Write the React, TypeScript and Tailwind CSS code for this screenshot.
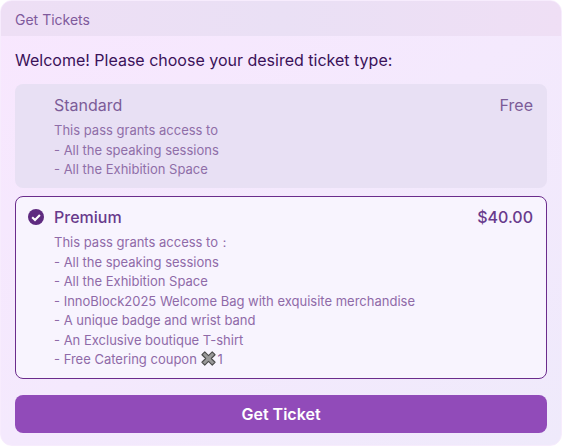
const standardLines = ['This pass grants access to', '- All the speaking sessions', '- All the Exhibition Space'];

const premiumLines = [
  'This pass grants access to：',
  '- All the speaking sessions',
  '- All the Exhibition Space',
  '- InnoBlock2025 Welcome Bag with exquisite merchandise',
  '- A unique badge and wrist band',
  '- An Exclusive boutique T-shirt',
];

const CheckIcon = () => (
  <svg width="16" height="16" viewBox="0 0 16 16" className="shrink-0">
    <circle cx="8" cy="8" r="8" fill="#5f2a80" />
    <path d="M4.2 8.3 L7 11 L11.9 5.9" fill="none" stroke="#fff" strokeWidth="2.1" />
  </svg>
);

const CrossEmoji = () => (
  <svg width="15" height="15" viewBox="0 0 16 16" className="inline-block align-[-2px] ml-[1px] mr-[1px]">
    <path
      d="M1 4 L4 1 L8 5 L12 1 L15 4 L11 8 L15 12 L12 15 L8 11 L4 15 L1 12 L5 8 Z"
      fill="#999999"
      stroke="#4d4d4d"
      strokeWidth="1.2"
      strokeLinejoin="round"
    />
  </svg>
);

const App = () => {
  return (
    <div className="w-[562px] h-[446px] overflow-hidden rounded-xl border border-[#f7ecfd] bg-gradient-to-br from-[#f8e7fe] via-[#f4e9fd] to-[#efeafb] font-['Inter',sans-serif]">
      <div className="h-[35px] flex items-center px-[14px] pt-[2px] text-sm text-[#7f5a9c] bg-gradient-to-r from-[#eedff5] via-[#eae0f5] to-[#efdff5]">
        Get Tickets
      </div>
      <div className="px-[14px] pt-[14px]">
        <p className="text-base leading-5 text-[#3a1259]">Welcome! Please choose your desired ticket type:</p>

        <div className="mt-[14px] h-[104px] rounded-lg bg-[#e8e0f4] pl-[39px] pr-[14px] pt-[9px]">
          <div className="flex justify-between text-base leading-6 text-[#7c5c98]">
            <span>Standard</span>
            <span>Free</span>
          </div>
          <div className="mt-[4px] text-[13px] leading-[19.5px] text-[#8f6ea8]">
            {standardLines.map((line) => (
              <div key={line}>{line}</div>
            ))}
          </div>
        </div>

        <div className="mt-2 h-[183px] rounded-lg border border-[#6b2c8c] bg-[#f8f4fe] pl-[38px] pr-[13px] pt-2 relative">
          <span className="absolute left-[12px] top-[12px]">
            <CheckIcon />
          </span>
          <div className="flex justify-between text-base font-medium leading-6 text-[#683a8c]">
            <span>Premium</span>
            <span>$40.00</span>
          </div>
          <div className="mt-[4px] text-[13px] leading-[19.5px] text-[#8f6aa8]">
            {premiumLines.map((line) => (
              <div key={line}>{line}</div>
            ))}
            <div>
              - Free Catering coupon <CrossEmoji />1
            </div>
          </div>
        </div>

        <button className="mt-4 w-full h-[38px] rounded-lg bg-[#914bb9] text-white text-base font-semibold">
          Get Ticket
        </button>
      </div>
    </div>
  );
};

export default App;
